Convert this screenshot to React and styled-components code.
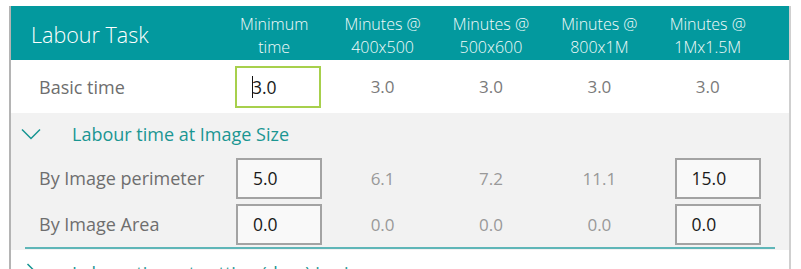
import styled, { createGlobalStyle } from "styled-components";

const GlobalStyle = createGlobalStyle`
  body {
    margin: 0;
    background: #ffffff;
    font-family: "Open Sans", "Noto Sans", sans-serif;
  }
`;

const COLS = "209px repeat(5, 108.4px) 1fr";

const Panel = styled.div`
  margin: 6px 0 0 9px;
  width: 782px;
  height: 263px;
  overflow: hidden;
  border-left: 2px solid #b4b4b4;
  border-right: 2px solid #cfcfcf;
  box-sizing: border-box;
`;

const Header = styled.div`
  display: grid;
  grid-template-columns: ${COLS};
  align-items: center;
  height: 54px;
  margin: 0 -2px;
  padding: 0 2px;
  background: #03999e;
  color: #ffffff;
`;

const Title = styled.div`
  padding-left: 20px;
  padding-top: 2px;
  font-size: 21.5px;
  font-weight: 300;
`;

const ColHead = styled.div`
  text-align: center;
  font-size: 16px;
  font-weight: 300;
  line-height: 23px;
  padding-top: 6px;
  color: #f4fbfb;
`;

const Row = styled.div`
  display: grid;
  grid-template-columns: ${COLS};
  align-items: center;
  height: ${(p) => p.$h}px;
  background: ${(p) => p.$bg || "transparent"};
`;

const Label = styled.div`
  padding-left: 28px;
  font-size: 18px;
  color: #6e6e6e;
`;

const Value = styled.div`
  text-align: center;
  font-size: 17px;
  color: ${(p) => (p.$dim ? "#999999" : "#7a7a7a")};
`;

const Cell = styled.div`
  display: flex;
  padding-left: ${(p) => p.$offset}px;
`;

const Input = styled.div`
  width: 86px;
  height: ${(p) => (p.$focus ? 42 : 41)}px;
  box-sizing: border-box;
  display: flex;
  align-items: center;
  padding-left: 15px;
  border: 2px solid ${(p) => (p.$focus ? "#a7d04c" : "#a3a3a3")};
  background: ${(p) => (p.$focus ? "#ffffff" : "#f9f9f9")};
  font-size: 17.5px;
  color: #1a1a1a;
`;

const Caret = styled.span`
  display: inline-block;
  width: 1px;
  height: 22px;
  background: #111111;
  margin-right: -1px;
`;

const Section = styled.div`
  background: #f2f2f2;
  padding-bottom: 1px;
`;

const SectionHead = styled.div`
  display: flex;
  align-items: center;
  height: 42px;
  margin-top: ${(p) => p.$shift || 0}px;
  color: #1a9692;
  font-size: 18px;
`;

const Chevron = styled.div`
  width: 61px;
  display: flex;
  padding-left: ${(p) => p.$left}px;
  box-sizing: border-box;
`;

const Rule = styled.div`
  height: 2px;
  margin: 0 14px;
  background: #5fb6b8;
`;

const ChevronDown = () => (
  <svg width="20" height="12" viewBox="0 0 20 12">
    <path d="M1 1.5 L10 10.5 L19 1.5" fill="none" stroke="#169592" strokeWidth="1.5" />
  </svg>
);

const ChevronRight = () => (
  <svg width="12" height="20" viewBox="0 0 12 20">
    <path d="M1.5 1 L10.5 10 L1.5 19" fill="none" stroke="#169592" strokeWidth="1.5" />
  </svg>
);

const headLines = [
  ["Minimum", "time"],
  ["Minutes @", "400x500"],
  ["Minutes @", "500x600"],
  ["Minutes @", "800x1M"],
  ["Minutes @", "1Mx1.5M"],
];

const sizeRows = [
  { label: "By Image perimeter", min: "5.0", values: ["6.1", "7.2", "11.1"], max: "15.0" },
  { label: "By Image Area", min: "0.0", values: ["0.0", "0.0", "0.0"], max: "0.0" },
];

const App = () => {
  return (
    <>
      <GlobalStyle />
      <Panel>
        <Header>
          <Title>Labour Task</Title>
          {headLines.map((lines) => (
            <ColHead key={lines.join(" ")}>
              {lines[0]}
              <br />
              {lines[1]}
            </ColHead>
          ))}
        </Header>

        <Row $h={53} $bg="#ffffff">
          <Label>Basic time</Label>
          <Cell $offset={15}>
            <Input $focus>
              <Caret />
              3.0
            </Input>
          </Cell>
          <Value>3.0</Value>
          <Value>3.0</Value>
          <Value>3.0</Value>
          <Value>3.0</Value>
        </Row>

        <Section>
          <SectionHead>
            <Chevron $left={10}>
              <ChevronDown />
            </Chevron>
            Labour time at Image Size
          </SectionHead>
          {sizeRows.map((r) => (
            <Row $h={46} key={r.label}>
              <Label>{r.label}</Label>
              <Cell $offset={16}>
                <Input>{r.min}</Input>
              </Cell>
              {r.values.map((v, i) => (
                <Value $dim key={i}>
                  {v}
                </Value>
              ))}
              <Cell $offset={21}>
                <Input>{r.max}</Input>
              </Cell>
            </Row>
          ))}
          <Rule />
        </Section>

        <SectionHead $shift={2}>
          <Chevron $left={15}>
            <ChevronRight />
          </Chevron>
          Labour time at setting (days) in size
        </SectionHead>
      </Panel>
    </>
  );
};

export default App;
